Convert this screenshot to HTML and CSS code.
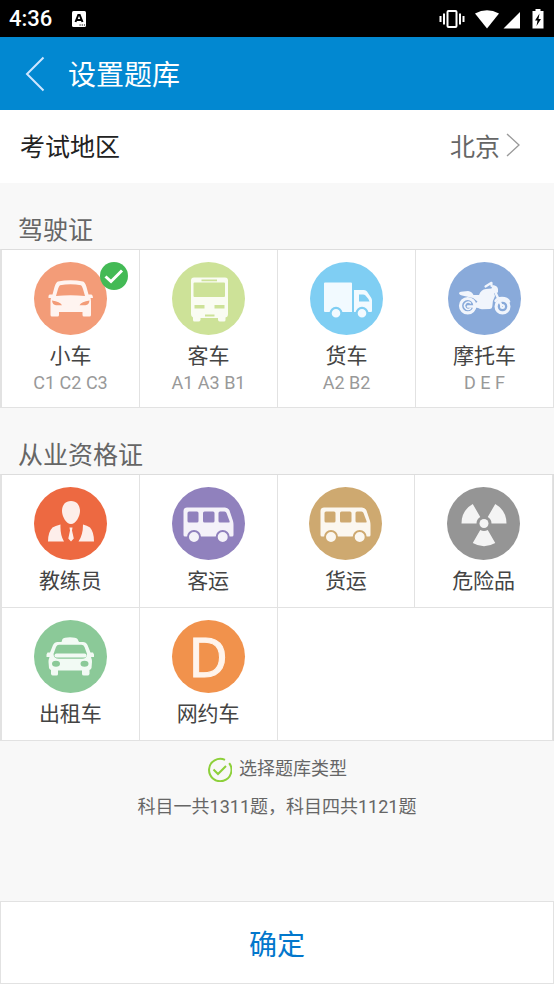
FILE: index.html
```html
<!DOCTYPE html>
<html lang="zh-CN">
<head>
<meta charset="utf-8">
<meta name="viewport" content="width=device-width, initial-scale=1">
<title>设置题库</title>
<link rel="stylesheet" href="styles.css">
</head>
<body>
<div class="status">
  <span class="time">4:36</span>
  <svg class="status-app" width="14" height="16" viewBox="0 0 14 16" aria-hidden="true"><rect width="14" height="16" rx="1.500" fill="#fff"/><path d="M3.500 11 6.300 4H7.700L10.500 11M4.800 9H9.200" fill="none" stroke="#000" stroke-width="2"/><path d="M7.500 14h1.200M9.700 14h1.200M11.900 14h1.200" stroke="#000" stroke-width="1.200"/></svg>
  <svg class="status-icons" width="106" height="20" viewBox="0 0 106 20" aria-hidden="true">
    <g fill="none" stroke="#fff"><rect x="8.500" y="2" width="9" height="16" rx="1" stroke-width="2"/><path d="M5 4.500V15.500M21 4.500V15.500" stroke-width="2"/><path d="M1.500 7V13M24.500 7V13" stroke-width="2"/></g>
    <path d="M36 4.500Q48 -2 60 4.500L48 19.500Z" fill="#fff"/>
    <path d="M81 3V19.500H64.500Z" fill="#fff"/>
    <path d="M93.500 2H96.500V0H101.500V2H104.500V19.500H93.500Z" fill="#fff"/>
    <path d="M100.500 4.500 96 11.500H98.500L97.500 17 102 10H99.500Z" fill="#000"/>
  </svg>
</div>

<header class="topbar">
  <button class="back" type="button" aria-label="返回"><svg width="20" height="36" viewBox="0 0 20 36"><path d="M18.500 1.500 2 18 18.500 34.500" fill="none" stroke="#cfe6ff" stroke-width="2"/></svg></button>
  <h1>设置题库</h1>
</header>

<button class="region" type="button">
  <span>考试地区</span>
  <span class="region-value">北京<svg width="14" height="24" viewBox="0 0 14 24" aria-hidden="true"><path d="M1 1 13 12 1 23" fill="none" stroke="#999" stroke-width="1.300"/></svg></span>
</button>

<main>
  <section>
    <h2>驾驶证</h2>
    <div class="grid">
      <button class="cell" type="button" aria-pressed="true">
        <span class="icon">
          <svg width="73" height="73" viewBox="0 0 73 73"><circle cx="36.500" cy="36.500" r="36.500" fill="#f39c78"/><path fill="#fff4f0" fill-rule="evenodd" d="M24 19.500Q36.500 17 49 19.500Q51 20 52.500 25L54.500 32.500H57.500Q59 33 59 36H56.500Q57 37 57 40V53Q57 54.500 55.500 54.500H50Q48.500 54.500 48.500 53V50H25V53Q25 54.500 23.500 54.500H18Q16.500 54.500 16.500 53V40Q16.500 37 17 36H14.500Q14 33 15.500 32.500H18.500L20.500 25Q22 20 24 19.500ZM26 23.300Q25 24 24 27L22 34Q36.500 32.500 51 34L49 27Q48 24 47 23.300Q36.500 21 26 23.300ZM18 38.500Q18.500 43 22 43.200H28Q26 39.500 18 38.500ZM55.500 38.500Q47.500 39.500 45.500 43.200H51.500Q55 43 55.500 38.500Z"/></svg>
          <svg class="badge" width="28" height="28" viewBox="0 0 28 28"><circle cx="14" cy="14" r="14" fill="#43ba55"/><path d="M5.500 14.500 11 19.500 22 8.500" fill="none" stroke="#fff" stroke-width="3"/></svg>
        </span>
        <span class="name">小车</span><span class="codes">C1 C2 C3</span>
      </button>
      <button class="cell" type="button" aria-pressed="false">
        <span class="icon"><svg width="73" height="73" viewBox="0 0 73 73"><circle cx="36.500" cy="36.500" r="36.500" fill="#cde298"/><path fill="#fafcf3" fill-rule="evenodd" d="M22 15.500H53Q56 15.500 56 18.500V52Q56 55 53.500 55.500V58Q53.500 59.500 52 59.500H48Q46.500 59.500 46 58V56H28.500V58Q28 59.500 26.500 59.500H22.500Q21 59.500 21 58V55.500Q19 55 19 52V18.500Q19 15.500 22 15.500ZM22.500 20.500Q21.500 20.500 21.500 21.500V34Q21.500 35 22.500 35H52Q53 35 53 34V21.500Q53 20.500 52 20.500ZM29.500 17.500V19.300H45V17.500ZM22.500 43V46.500H32.500V43ZM42.500 43V46.500H52.500V43ZM33 52.500V54.500H42.500V52.500Z"/></svg></span>
        <span class="name">客车</span><span class="codes">A1 A3 B1</span>
      </button>
      <button class="cell" type="button" aria-pressed="false">
        <span class="icon"><svg width="73" height="73" viewBox="0 0 73 73"><circle cx="36.500" cy="36.500" r="36.500" fill="#7fcef3"/><path fill="#f2faff" fill-rule="evenodd" d="M15 20.500H41Q42 20.500 42 21.500V50H15Q14 50 14 49V21.500Q14 20.500 15 20.500ZM44 28H54Q56 28 57 29.500L61 35.500Q62 37 62 38.500V49Q62 50 61 50H44ZM49 32.500V39.500H59.500Q58.500 36.500 55.500 33.500Q54.500 32.500 53 32.500Z"/><g fill="#f2faff" stroke="#7fcef3" stroke-width="2.200"><circle cx="26" cy="51.300" r="5.400"/><circle cx="52" cy="51.300" r="5.400"/></g></svg></span>
        <span class="name">货车</span><span class="codes">A2 B2</span>
      </button>
      <button class="cell" type="button" aria-pressed="false">
        <span class="icon"><svg width="73" height="73" viewBox="0 0 73 73"><circle cx="36.500" cy="36.500" r="36.500" fill="#89aada"/><g fill="none" stroke="#f1f5fc" stroke-linecap="round" stroke-linejoin="round"><circle cx="19.700" cy="43.700" r="7.200" stroke-width="3.200"/><path d="M22.500 41A3.600 3.600 0 1 0 22.500 46.500" stroke-width="1.500"/><circle cx="54.500" cy="44.500" r="6.400" stroke-width="3.200"/><circle cx="54.500" cy="44.500" r="1.500" stroke-width="2"/><path d="M46.500 28.500 53.500 43.500" stroke-width="2.500"/><path d="M47.500 39Q49 36 54 36Q59.500 36 61 39.500" stroke-width="2.500"/><path d="M37.500 24.500 43.500 20.800V24" stroke-width="2.200"/><path d="M20 44.500H31" stroke-width="2.500"/></g><path fill="#f1f5fc" d="M11 31.500Q11 29.800 13 29.800L20 29Q24 29.500 25.500 33H31Q33 27.500 38 27L43.500 26.500L44.500 23Q49.500 23.500 50 27V30.500L46 31L47 34Q44.500 38 44.300 44.500Q44.200 46.800 42 47L34 47.200Q29 46.500 26.500 42.500L29.500 39.500L25 36L14 33.500Q11.500 33 11 31.500Z"/></svg></span>
        <span class="name">摩托车</span><span class="codes">D E F</span>
      </button>
    </div>
  </section>

  <section>
    <h2>从业资格证</h2>
    <div class="grid grid-work">
      <button class="cell" type="button" aria-pressed="false">
        <span class="icon"><svg width="73" height="73" viewBox="0 0 73 73"><circle cx="36.500" cy="36.500" r="36.500" fill="#ed6941"/><path fill="#fdeeea" d="M37 14C43 14 46 18.500 46 24C46 29 42 37 37 37S28 29 28 24C28 18.500 31 14 37 14ZM26.500 37.500Q26 48 30 54.500H14Q14 45 18.500 40.500Q21 39 26.500 37.500ZM49 37.500Q49 48 44.500 54.500H60Q60 45 56 40.500Q53 38.500 49 37.500ZM35.500 40.500H38.500L38 43.500L39.800 51.500L37 54.500L34.300 51.500L36 43.500Z"/></svg></span>
        <span class="name">教练员</span>
      </button>
      <button class="cell" type="button" aria-pressed="false">
        <span class="icon"><svg width="73" height="73" viewBox="0 0 73 73"><circle cx="36.500" cy="36.500" r="36.500" fill="#9081bd"/><path fill="#f4f2f9" fill-rule="evenodd" d="M15 20.500H53Q56 20.500 57.500 23.500L61 34Q61.500 36 61.500 38V48Q61.500 49.500 60 49.500H13Q11.500 49.500 11.500 48V24Q11.500 20.500 15 20.500ZM17 24.500Q15.500 24.500 15.500 26V34Q15.500 35.500 17 35.500H25Q26.500 35.500 26.500 34V26Q26.500 24.500 25 24.500ZM32.500 24.500Q31 24.500 31 26V34Q31 35.500 32.500 35.500H41Q42.500 35.500 42.500 34V26Q42.500 24.500 41 24.500ZM48 24.500Q46.500 24.500 46.500 26V34Q46.500 35.500 48 35.500H56.500Q58 35.500 57.500 34L54.500 26Q54 24.500 52.500 24.500Z"/><g fill="#f4f2f9" stroke="#9081bd" stroke-width="2"><circle cx="22" cy="50" r="6"/><circle cx="50.700" cy="50" r="6"/></g></svg></span>
        <span class="name">客运</span>
      </button>
      <button class="cell" type="button" aria-pressed="false">
        <span class="icon"><svg width="73" height="73" viewBox="0 0 73 73"><circle cx="36.500" cy="36.500" r="36.500" fill="#cea970"/><path fill="#fbf7f0" fill-rule="evenodd" d="M15 20.500H53Q56 20.500 57.500 23.500L61 34Q61.500 36 61.500 38V48Q61.500 49.500 60 49.500H13Q11.500 49.500 11.500 48V24Q11.500 20.500 15 20.500ZM17 24.500Q15.500 24.500 15.500 26V34Q15.500 35.500 17 35.500H25Q26.500 35.500 26.500 34V26Q26.500 24.500 25 24.500ZM32.500 24.500Q31 24.500 31 26V34Q31 35.500 32.500 35.500H41Q42.500 35.500 42.500 34V26Q42.500 24.500 41 24.500ZM48 24.500Q46.500 24.500 46.500 26V34Q46.500 35.500 48 35.500H56.500Q58 35.500 57.500 34L54.500 26Q54 24.500 52.500 24.500Z"/><g fill="#fbf7f0" stroke="#cea970" stroke-width="2"><circle cx="22" cy="50" r="6"/><circle cx="50.700" cy="50" r="6"/></g></svg></span>
        <span class="name">货运</span>
      </button>
      <button class="cell" type="button" aria-pressed="false">
        <span class="icon"><svg width="73" height="73" viewBox="0 0 73 73"><circle cx="36.500" cy="36.500" r="36.500" fill="#959595"/><g fill="#f4f4f4"><circle cx="37" cy="36.500" r="4.500"/><path d="M14.500 36.500A22.500 22.500 0 0 1 25.750 17L33.250 30A7.500 7.500 0 0 0 29.500 36.500ZM59.500 36.500A22.500 22.500 0 0 0 48.250 17L40.750 30A7.500 7.500 0 0 1 44.500 36.500ZM25.750 56A22.500 22.500 0 0 0 48.250 56L40.750 43A7.500 7.500 0 0 1 33.250 43Z"/></g></svg></span>
        <span class="name">危险品</span>
      </button>
      <button class="cell" type="button" aria-pressed="false">
        <span class="icon"><svg width="73" height="73" viewBox="0 0 73 73"><circle cx="36.500" cy="36.500" r="36.500" fill="#8bc998"/><path fill="#f2faf4" fill-rule="evenodd" d="M27.500 22L28.500 19Q30 17.300 36 17.300T43.500 19L45 22H49Q52 22 53.500 25L56.500 32.500H59Q60.500 34 60 37H57Q58 39.500 58 42L57.500 48Q57 49.500 55.500 50V54Q55 55.500 53.500 55.500H50Q48 55.500 48 54V50.500H24V54Q24 55.500 22.500 55.500H19Q17.500 55.500 17 54V50Q15.500 49.500 15 48L14.500 42Q14.500 39.500 15.500 37H12.500Q12 34 13.500 32.500H16L19 25Q20.500 22 23.500 22ZM25 24.700Q23 24.700 22 27L19.500 34Q19.500 38.500 25 38.800H48Q53 38.500 53 34L50.500 27Q49.500 24.700 47.500 24.700ZM18 43.700a4 3 0 0 0 8 0a4 3 0 0 0-8 0ZM46.500 43.700a4 3 0 0 0 8 0a4 3 0 0 0-8 0Z"/><rect x="20.500" y="33.500" width="32" height="4" rx="2" fill="#f2faf4"/></svg></span>
        <span class="name">出租车</span>
      </button>
      <button class="cell" type="button" aria-pressed="false">
        <span class="icon letter">D</span>
        <span class="name">网约车</span>
      </button>
      <div class="cell cell-blank"></div>
    </div>
  </section>

  <div class="summary">
    <p class="type"><svg width="25" height="25" viewBox="0 0 25 25" aria-hidden="true"><g fill="none" stroke="#8dd03a" stroke-width="2"><path d="M22.200 6.200A11.200 11.200 0 1 1 18 2.800"/><path d="M6.500 12.500 11 17 19 9"/></g></svg>选择题库类型</p>
    <p>科目一共1311题，科目四共1121题</p>
  </div>
</main>

<button class="confirm" type="button">确定</button>
</body>
</html>
```
FILE: styles.css
```css
* {
  box-sizing: border-box;
}

body {
  margin: 0;
  min-height: 100vh;
  display: flex;
  flex-direction: column;
  background: #f8f8f8;
  color: #444;
  font-family: Roboto, "Noto Sans CJK SC", sans-serif;
}

button {
  margin: 0;
  padding: 0;
  border: 0;
  background: none;
  color: inherit;
  font: inherit;
  cursor: pointer;
}

svg {
  display: block;
}

h1,
h2,
p {
  margin: 0;
  font-weight: 400;
}

.status {
  display: flex;
  align-items: center;
  height: 37px;
  padding: 0 9px;
  background: #000;
  color: #fff;
}

.time {
  font-size: 22px;
  font-weight: 500;
  line-height: 36px;
}

.status-app {
  margin-left: 20px;
}

.status-icons {
  margin-left: auto;
}

.topbar {
  display: flex;
  align-items: center;
  height: 73px;
  padding-left: 25px;
  gap: 23px;
  background: #0288d1;
  color: #fff;
}

h1 {
  padding-top: 4px;
  font-size: 28px;
  line-height: 40px;
}

.region {
  display: flex;
  align-items: center;
  justify-content: space-between;
  height: 73px;
  padding: 0 34px 3px 20px;
  background: #fff;
  color: #222;
  font-size: 25px;
}

.region-value {
  display: flex;
  align-items: center;
  gap: 6px;
  color: #666;
}

h2 {
  padding: 30px 18px 0;
  color: #666;
  font-size: 25px;
  line-height: 36px;
}

.grid {
  display: grid;
  grid-template-columns: repeat(4, 1fr);
  border-top: 1px solid #ddd;
  border-left: 2px solid #e2e2e2;
}

.grid-work {
  border-right: 1px solid #ddd;
}

.cell {
  display: flex;
  flex-direction: column;
  align-items: center;
  padding: 12px 0 11px;
  border-right: 1px solid #e2e2e2;
  border-bottom: 1px solid #e2e2e2;
  background: #fff;
}

.grid-work .cell {
  padding-bottom: 12px;
}

.cell-blank {
  grid-column: span 2;
}

.icon {
  position: relative;
  margin-bottom: 7px;
}

.badge {
  position: absolute;
  top: 0;
  right: -21px;
}

.letter {
  width: 73px;
  height: 73px;
  border-radius: 50%;
  background: #f1924c;
  color: #fff4ec;
  font-family: "Noto Sans", sans-serif;
  font-size: 54px;
  line-height: 73px;
  text-align: center;
  -webkit-text-stroke: 1px #fff4ec;
}

.name {
  font-size: 21px;
  line-height: 28px;
}

.codes {
  color: #999;
  font-size: 18px;
  line-height: 26px;
}

.summary {
  display: flex;
  flex-direction: column;
  align-items: center;
  gap: 10px;
  padding: 14px 0;
  color: #666;
  font-size: 18px;
  line-height: 28px;
}

.type {
  display: flex;
  align-items: center;
  gap: 7px;
}

.confirm {
  height: 83px;
  margin-top: auto;
  border: 1px solid #e2e2e2;
  background: #fff;
  color: #0277cc;
  font-size: 28px;
}
```
